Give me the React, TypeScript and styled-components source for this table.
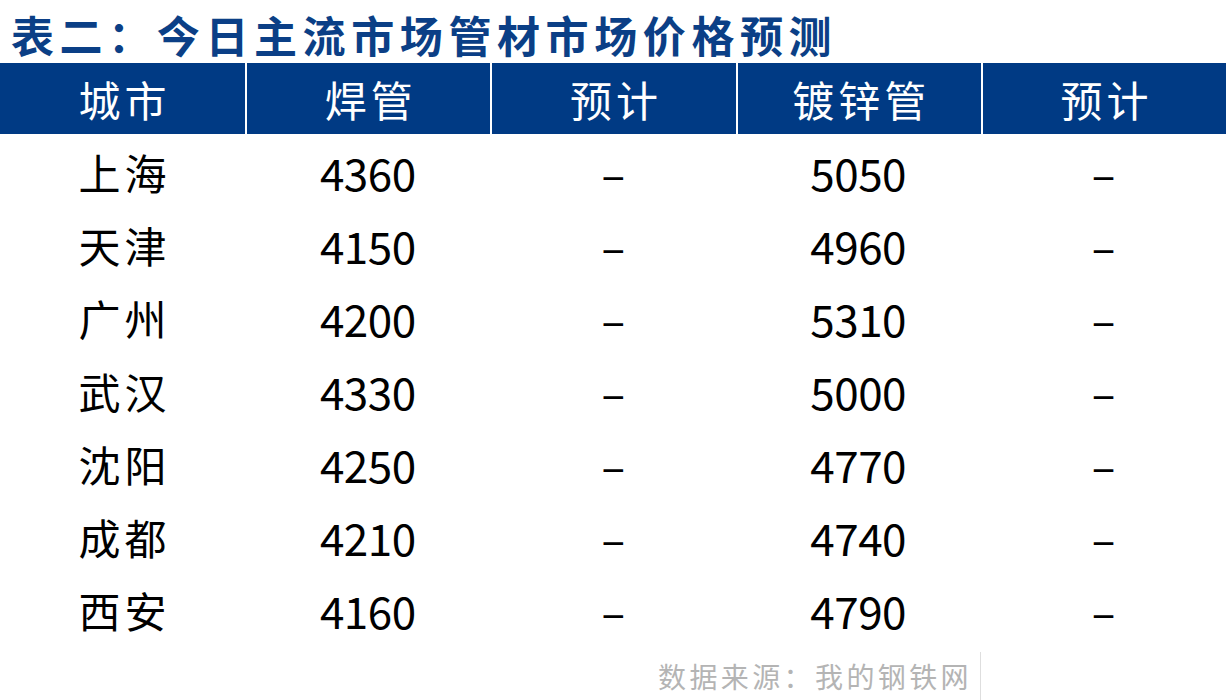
import styled, { createGlobalStyle } from "styled-components";

const GlobalStyle = createGlobalStyle`
  body {
    margin: 0;
    background: #fff;
    font-family: "Noto Sans CJK SC", "Noto Sans", sans-serif;
  }
`;

const Page = styled.div`
  width: 1226px;
  height: 700px;
  overflow: hidden;
  display: flex;
  flex-direction: column;
`;

const Title = styled.h1`
  margin: 0;
  height: 63px;
  display: flex;
  align-items: center;
  padding: 4px 0 0 11px;
  box-sizing: border-box;
  font-size: 43px;
  font-weight: 700;
  letter-spacing: 5.6px;
  color: #0b3f86;
  white-space: nowrap;
`;

const Grid = styled.div`
  display: grid;
  grid-template-columns: repeat(5, 1fr);
`;

const HeaderRow = styled(Grid)`
  height: 71px;
  background: #003a84;
`;

const HeadCell = styled.div<{ $first?: boolean }>`
  display: flex;
  align-items: center;
  justify-content: center;
  color: #fff;
  font-size: 42px;
  letter-spacing: 4px;
  padding-left: 4px;
  border-left: ${(p) => (p.$first ? "none" : "2px solid #fff")};
`;

const Body = styled.div`
  padding-top: 1px;
`;

const Row = styled(Grid)`
  height: 73px;
`;

const Cell = styled.div<{ $city?: boolean }>`
  display: flex;
  align-items: center;
  justify-content: center;
  color: #000;
  font-size: ${(p) => (p.$city ? "42px" : "44px")};
  letter-spacing: ${(p) => (p.$city ? "4px" : "-0.5px")};
  padding-left: ${(p) => (p.$city ? "4px" : "0")};
`;

const Footer = styled.div`
  flex: 1;
  display: flex;
  justify-content: flex-end;
  padding-right: 245px;
  padding-top: 6px;
`;

const Source = styled.div`
  display: flex;
  align-items: center;
  padding-right: 8px;
  border-right: 1px solid #dedede;
  color: #b4b4b4;
  font-size: 28px;
  letter-spacing: 3.4px;
`;

const rows = [
  ["上海", "4360", "5050"],
  ["天津", "4150", "4960"],
  ["广州", "4200", "5310"],
  ["武汉", "4330", "5000"],
  ["沈阳", "4250", "4770"],
  ["成都", "4210", "4740"],
  ["西安", "4160", "4790"],
];

const heads = ["城市", "焊管", "预计", "镀锌管", "预计"];

export default function App() {
  return (
    <Page>
      <GlobalStyle />
      <Title>表二：今日主流市场管材市场价格预测</Title>
      <HeaderRow>
        {heads.map((h, i) => (
          <HeadCell key={i} $first={i === 0}>
            {h}
          </HeadCell>
        ))}
      </HeaderRow>
      <Body>
        {rows.map(([city, weld, galv]) => (
          <Row key={city}>
            <Cell $city>{city}</Cell>
            <Cell>{weld}</Cell>
            <Cell>–</Cell>
            <Cell>{galv}</Cell>
            <Cell>–</Cell>
          </Row>
        ))}
      </Body>
      <Footer>
        <Source>数据来源：我的钢铁网</Source>
      </Footer>
    </Page>
  );
}
